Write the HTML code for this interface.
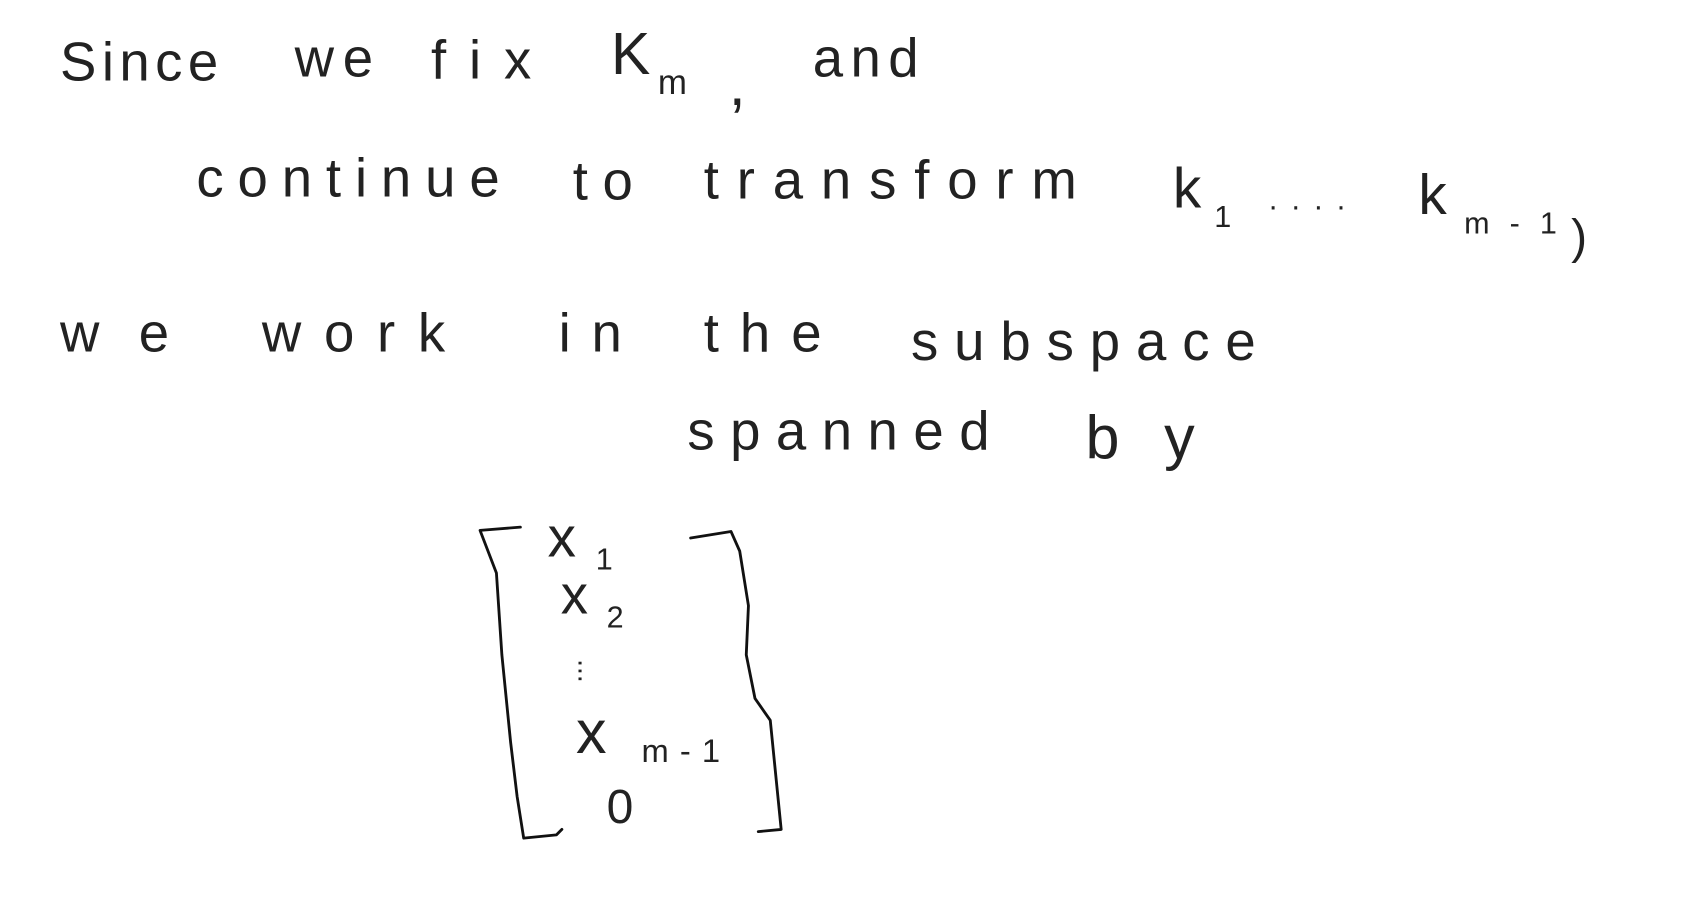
<!DOCTYPE html>
<html><head><meta charset="utf-8"><style>
html,body{margin:0;padding:0;background:#fff;width:1702px;height:920px;overflow:hidden}
svg{display:block}
text{font-family:"Liberation Sans",sans-serif;fill:#222}
</style></head><body>
<svg width="1702" height="920" viewBox="0 0 1560 843" preserveAspectRatio="none">
<g font-size="50">
<text x="55" y="74" textLength="145" lengthAdjust="spacing">Since</text>
<text x="270" y="70" textLength="72" lengthAdjust="spacing">we</text>
<text x="395" y="72" textLength="92" lengthAdjust="spacing">fix</text>
<text x="560" y="68" font-size="54">K</text>
<text x="603" y="86" font-size="32" textLength="32" lengthAdjust="spacing">m</text>
<text x="668" y="96" font-size="56">,</text>
<text x="745" y="70" textLength="97" lengthAdjust="spacing">and</text>

<text x="180" y="180" textLength="278" lengthAdjust="spacing">continue</text>
<text x="525" y="183" textLength="55" lengthAdjust="spacing">to</text>
<text x="645" y="182" textLength="342" lengthAdjust="spacing">transform</text>
<text x="1075" y="190" font-size="52">k</text>
<text x="1113" y="208" font-size="28">1</text>
<text x="1163" y="192" font-size="28" textLength="70" lengthAdjust="spacing">....</text>
<text x="1300" y="196" font-size="52">k</text>
<text x="1342" y="214" font-size="28" textLength="85" lengthAdjust="spacing">m-1</text>
<text x="1440" y="232" font-size="44">)</text>

<text x="55" y="322" textLength="100" lengthAdjust="spacing">we</text>
<text x="240" y="322" textLength="168" lengthAdjust="spacing">work</text>
<text x="512" y="322" textLength="58" lengthAdjust="spacing">in</text>
<text x="645" y="322" textLength="108" lengthAdjust="spacing">the</text>
<text x="835" y="330" textLength="316" lengthAdjust="spacing">subspace</text>

<text x="630" y="412" textLength="277" lengthAdjust="spacing">spanned</text>
<text x="995" y="420" textLength="100" lengthAdjust="spacing" font-size="56">by</text>

<text x="502" y="510" font-size="52">x</text>
<text x="546" y="522" font-size="28">1</text>
<text x="514" y="562" font-size="50">x</text>
<text x="556" y="575" font-size="28">2</text>
<text x="542" y="628" font-size="26" transform="rotate(90 548 610)">...</text>
<text x="528" y="690" font-size="56">x</text>
<text x="588" y="698" font-size="30" textLength="72" lengthAdjust="spacing">m-1</text>
<text x="556" y="754" font-size="44">0</text>
</g>
<g fill="none" stroke="#111" stroke-width="2.6" stroke-linecap="round" stroke-linejoin="round">
<path d="M477 483 L440 486 L455 525 L460 600 L468 680 L474 730 L480 768 L510 765 L515 760"/>
<path d="M633 493 L670 487 L678 505 L686 555 L684 600 L692 640 L706 660 L710 700 L716 760 L695 762"/>
</g>
</svg>
</body></html>
